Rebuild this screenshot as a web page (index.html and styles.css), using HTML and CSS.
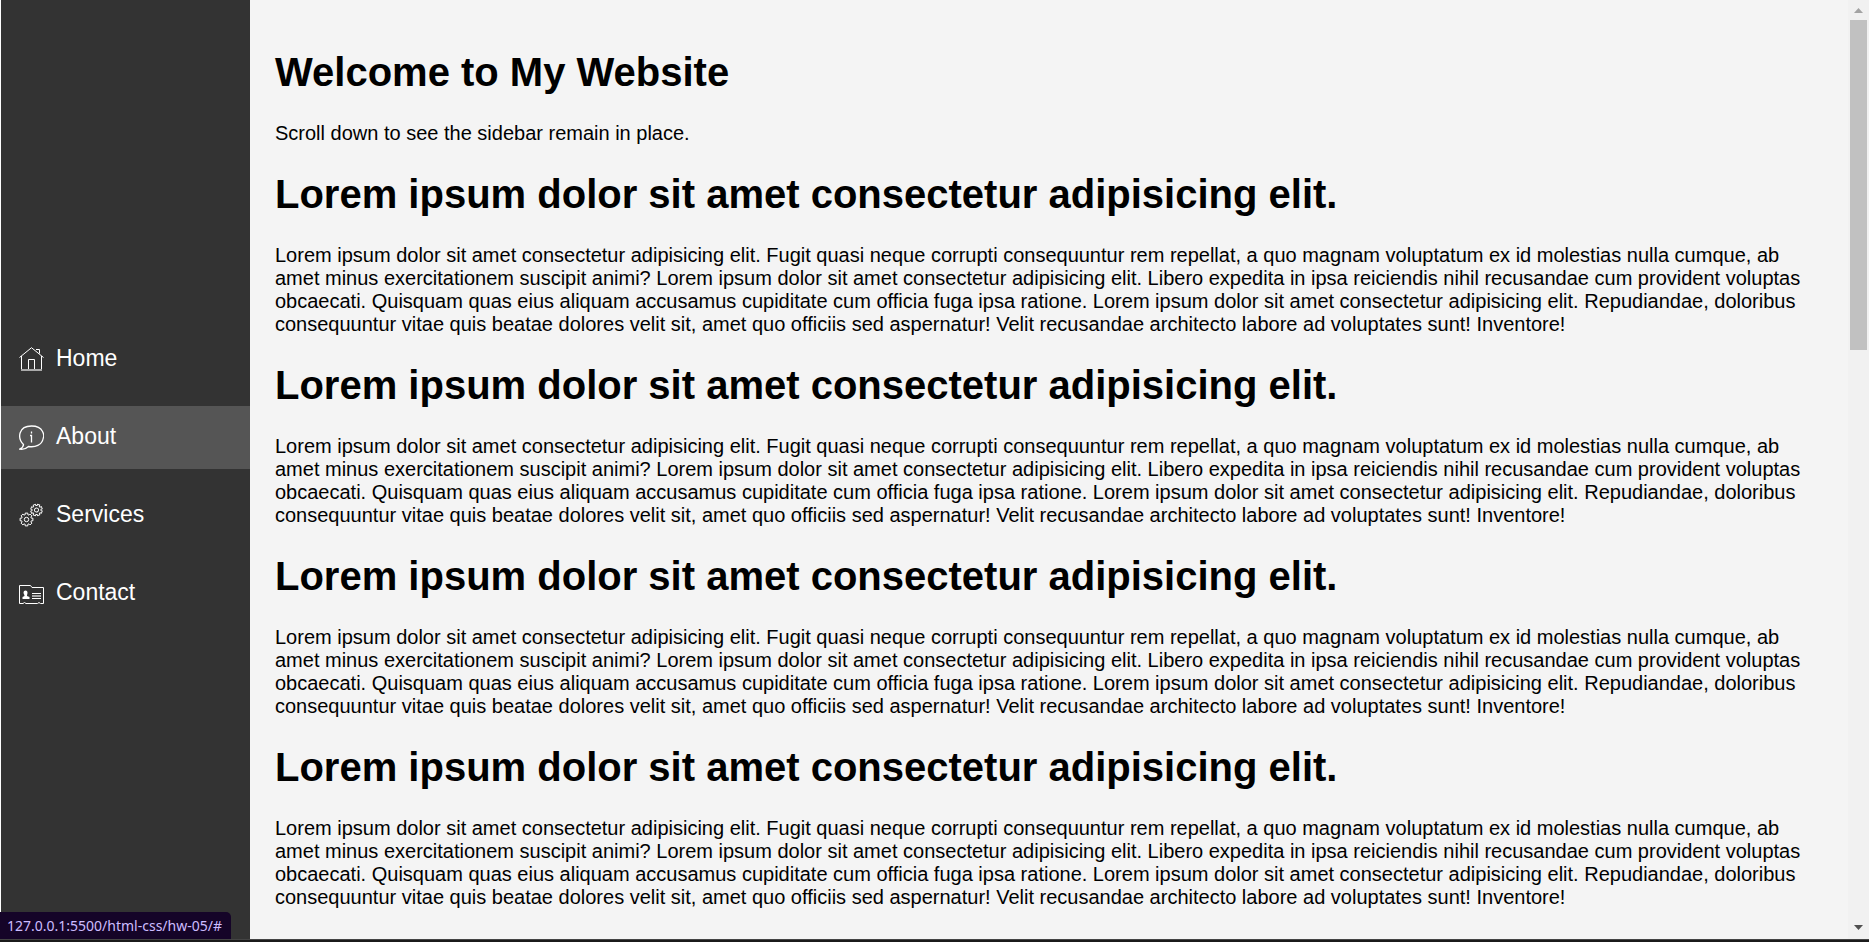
FILE: index.html
```html
<!DOCTYPE html>
<html lang="en">
<head>
<meta charset="utf-8">
<title>My Website</title>
<link rel="stylesheet" href="styles.css">
</head>
<body>
<div class="layout">
  <nav class="sidebar">
    <a class="nav-link" href="#">
      <svg class="icon" viewBox="0 0 25 25"><path d="M.5 10.500 12.500.7 24.500 10.500M2.500 9V22.500M22.500 9V22.500M9.500 22V12.500H15.500V22M17 2.500H20.500V6.500"/><path class="soft" d="M2 23H23" stroke-width="2"/></svg>
      <span>Home</span>
    </a>
    <a class="nav-link active" href="#">
      <svg class="icon icon-info" viewBox="0 0 25 25"><path d="M4.500 19.500C-2 13-.5 1 12.500 1S25 11.500 24.300 13C23 20.500 16 22.500 9.500 21.500 7 24 3 24.500.7 24.200 3 23 4.500 21.500 4.500 19.500Z"/><path d="M12.500 6.500V8.500M11 10.500H12.500V17.500"/></svg>
      <span>About</span>
    </a>
    <a class="nav-link" href="#">
      <svg class="icon" viewBox="0 0 25 25">
        <defs><path id="gear" d="M4.850-1.300 6.400-1.300 6.400 1.300 4.850 1.300 4.350 2.500 5.450 3.600 3.600 5.450 2.500 4.350 1.300 4.850 1.300 6.400-1.300 6.400-1.300 4.850-2.500 4.350-3.600 5.450-5.450 3.600-4.350 2.500-4.850 1.300-6.400 1.300-6.400-1.300-4.850-1.300-4.350-2.500-5.450-3.600-3.600-5.450-2.500-4.350-1.300-4.850-1.300-6.400 1.300-6.400 1.300-4.850 2.500-4.350 3.600-5.450 5.450-3.600 4.350-2.500ZM2.200 0A2.200 2.200 0 1 1-2.200 0 2.200 2.200 0 0 1 2.200 0Z"/></defs>
        <use href="#gear" transform="translate(7.500 16.500)"/>
        <use href="#gear" transform="translate(17.500 7) rotate(22) scale(.9)"/>
      </svg>
      <span>Services</span>
    </a>
    <a class="nav-link" href="#">
      <svg class="icon" viewBox="0 0 25 25"><path d="M.5 22.500V4.500H11.500L13 6.500H24.500V22.500H21.500L20 21.500 18.500 22.500H7L5.500 21.500 4 22.500Z"/><path d="M13 12.500H22M13 17.500H22"/><path class="soft" d="M13 15H22" stroke-width="2"/><path class="solid" d="M4.500 11.500a2 2 0 0 1 4 0c0 1.500-.5 2-.5 3.500l2.500 1v2h-7v-2l2-1c0-1.500-1-2-1-3.500Z"/></svg>
      <span>Contact</span>
    </a>
  </nav>
  <main class="content">
    <h1>Welcome to My Website</h1>
    <p>Scroll down to see the sidebar remain in place.</p>
    <h1>Lorem ipsum dolor sit amet consectetur adipisicing elit.</h1>
    <p>Lorem ipsum dolor sit amet consectetur adipisicing elit. Fugit quasi neque corrupti consequuntur rem repellat, a quo magnam voluptatum ex id molestias nulla cumque, ab amet minus exercitationem suscipit animi? Lorem ipsum dolor sit amet consectetur adipisicing elit. Libero expedita in ipsa reiciendis nihil recusandae cum provident voluptas obcaecati. Quisquam quas eius aliquam accusamus cupiditate cum officia fuga ipsa ratione. Lorem ipsum dolor sit amet consectetur adipisicing elit. Repudiandae, doloribus consequuntur vitae quis beatae dolores velit sit, amet quo officiis sed aspernatur! Velit recusandae architecto labore ad voluptates sunt! Inventore!</p>
    <h1>Lorem ipsum dolor sit amet consectetur adipisicing elit.</h1>
    <p>Lorem ipsum dolor sit amet consectetur adipisicing elit. Fugit quasi neque corrupti consequuntur rem repellat, a quo magnam voluptatum ex id molestias nulla cumque, ab amet minus exercitationem suscipit animi? Lorem ipsum dolor sit amet consectetur adipisicing elit. Libero expedita in ipsa reiciendis nihil recusandae cum provident voluptas obcaecati. Quisquam quas eius aliquam accusamus cupiditate cum officia fuga ipsa ratione. Lorem ipsum dolor sit amet consectetur adipisicing elit. Repudiandae, doloribus consequuntur vitae quis beatae dolores velit sit, amet quo officiis sed aspernatur! Velit recusandae architecto labore ad voluptates sunt! Inventore!</p>
    <h1>Lorem ipsum dolor sit amet consectetur adipisicing elit.</h1>
    <p>Lorem ipsum dolor sit amet consectetur adipisicing elit. Fugit quasi neque corrupti consequuntur rem repellat, a quo magnam voluptatum ex id molestias nulla cumque, ab amet minus exercitationem suscipit animi? Lorem ipsum dolor sit amet consectetur adipisicing elit. Libero expedita in ipsa reiciendis nihil recusandae cum provident voluptas obcaecati. Quisquam quas eius aliquam accusamus cupiditate cum officia fuga ipsa ratione. Lorem ipsum dolor sit amet consectetur adipisicing elit. Repudiandae, doloribus consequuntur vitae quis beatae dolores velit sit, amet quo officiis sed aspernatur! Velit recusandae architecto labore ad voluptates sunt! Inventore!</p>
    <h1>Lorem ipsum dolor sit amet consectetur adipisicing elit.</h1>
    <p>Lorem ipsum dolor sit amet consectetur adipisicing elit. Fugit quasi neque corrupti consequuntur rem repellat, a quo magnam voluptatum ex id molestias nulla cumque, ab amet minus exercitationem suscipit animi? Lorem ipsum dolor sit amet consectetur adipisicing elit. Libero expedita in ipsa reiciendis nihil recusandae cum provident voluptas obcaecati. Quisquam quas eius aliquam accusamus cupiditate cum officia fuga ipsa ratione. Lorem ipsum dolor sit amet consectetur adipisicing elit. Repudiandae, doloribus consequuntur vitae quis beatae dolores velit sit, amet quo officiis sed aspernatur! Velit recusandae architecto labore ad voluptates sunt! Inventore!</p>
  </main>
  <div class="scrollbar" aria-hidden="true">
    <svg class="arrow arrow-up" viewBox="0 0 9 5"><path d="M0 5 4.500 0 9 5Z"/></svg>
    <div class="track"><div class="thumb"></div></div>
    <svg class="arrow arrow-down" viewBox="0 0 9 5"><path d="M0 0H9L4.500 5Z"/></svg>
  </div>
  <div class="status">127.0.0.1:5500/html-css/hw-05/#</div>
</div>
<div class="window-edge"></div>
</body>
</html>
```
FILE: styles.css
```css
* { box-sizing: border-box; }

body {
  display: flex;
  flex-direction: column;
  height: 100vh;
  margin: 0;
  overflow: hidden;
  background: #f4f4f4;
  font-family: "Liberation Sans", Arial, sans-serif;
  font-size: 20px;
  line-height: 23px;
  color: #000;
}

.layout {
  position: relative;
  display: grid;
  grid-template-columns: 250px 1fr 21px;
  flex: 1;
  min-height: 0;
}

.sidebar {
  display: flex;
  flex-direction: column;
  justify-content: center;
  gap: 15px;
  padding-top: 14px;
  border-left: 1px solid #fff;
  background: #333;
}

.nav-link {
  display: flex;
  align-items: center;
  gap: 12px;
  padding: 18px;
  color: #fff;
  font-size: 23px;
  line-height: 27px;
  text-decoration: none;
}

.nav-link.active { background: #555; }

.nav-link span { padding-bottom: 3px; line-height: 24px; }

.icon {
  width: 25px;
  height: 25px;
  fill: none;
  stroke: #fff;
}

.icon-info { stroke-width: 1.3; }
.soft { stroke: #aaa; }
.solid { fill: #fff; stroke: none; }

.content {
  min-height: 0;
  padding: 23px 25px;
  overflow: hidden;
}

.content h1 {
  margin: 27px 0;
  font-size: 40px;
  line-height: 45px;
}

.content p { margin: 27px 0; }

.scrollbar {
  display: flex;
  flex-direction: column;
  align-items: center;
  padding: 8px 2px 9px;
  background: #f1f1f1;
}

.arrow { width: 9px; height: 5px; }
.arrow-up { fill: #a3a3a3; }
.arrow-down { fill: #505050; }

.track {
  flex: 1;
  align-self: stretch;
  padding: 7px 0;
}

.thumb { height: 36.8%; background: #c1c1c1; }

.status {
  position: absolute;
  bottom: 0;
  left: 0;
  padding: 4px 9px 4px 7px;
  border-top-right-radius: 5px;
  background: #150428;
  color: #cdbdff;
  font-family: "Noto Sans", sans-serif;
  font-size: 14px;
  line-height: 19px;
}

.window-edge {
  height: 3px;
  border-top: 1px solid #444;
  background: #1b1b1b;
}
```
